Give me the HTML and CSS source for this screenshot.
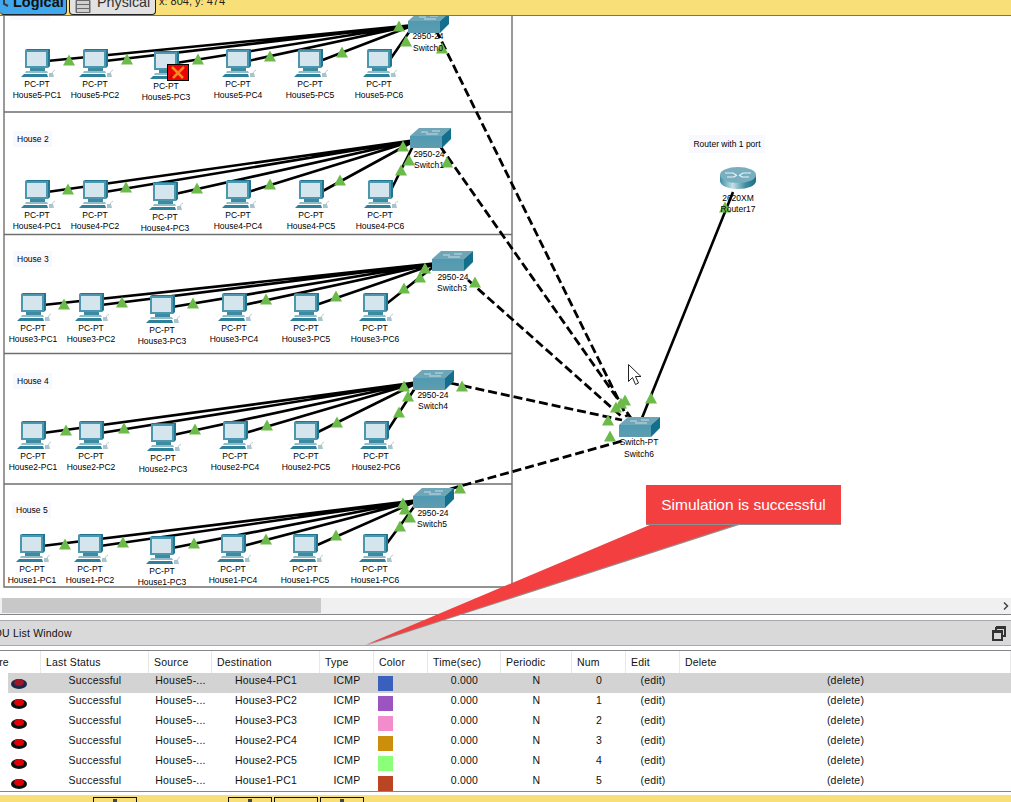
FILE: index.html
```html
<!DOCTYPE html>
<html lang="en">

<head>
    <meta charset="UTF-8">
    <title>Packet Tracer - Simulation</title>
    <link rel="stylesheet" href="styles.css">
</head>

<body>
    <!-- Top toolbar -->
    <div class="topbar">
        <div class="tab tab-logical">
            <svg class="tab-icon-logical" width="8" height="7" viewBox="0 0 8 7"><path d="M2 0v4l4 2" fill="none" stroke="#3a3a3a" stroke-width="2"/></svg>
            <span class="tab-text">Logical</span>
        </div>
        <div class="tab tab-physical">
            <svg class="tab-icon-physical" width="16" height="14" viewBox="0 0 16 14"><rect x="0.5" y="0" width="15" height="13" rx="1" fill="#6a6a6a"/><rect x="2" y="1" width="12" height="3" fill="#cfcfcf"/><rect x="2" y="5" width="12" height="3" fill="#cfcfcf"/><rect x="2" y="9" width="12" height="3" fill="#cfcfcf"/></svg>
            <span class="tab-text">Physical</span>
        </div>
        <span class="coords">x: 804, y: 474</span>
    </div>

    <!-- Workspace -->
    <div class="canvas">
        <svg class="diagram" width="1011" height="582" viewBox="0 16 1011 582">
            <defs>
                <linearGradient id="switchFront" x1="0" y1="0" x2="0" y2="1">
                    <stop offset="0" stop-color="#4f9ab2"/>
                    <stop offset="1" stop-color="#5f9cb0"/>
                </linearGradient>
                <linearGradient id="routerBody" x1="0" y1="0" x2="1" y2="0">
                    <stop offset="0" stop-color="#3f8ea3"/>
                    <stop offset="0.35" stop-color="#c4e0e6"/>
                    <stop offset="0.7" stop-color="#3f8ea3"/>
                    <stop offset="1" stop-color="#1c6e86"/>
                </linearGradient>
                <g id="pc">
                    <polygon points="4,1 6,0 29,0 29,17 27,19 4,19" fill="#1f7690"/>
                    <rect x="4" y="1" width="23" height="18" fill="#4c97ae"/>
                    <rect x="6" y="3" width="19" height="14" fill="#d5e5ed"/>
                    <rect x="9" y="19" width="15" height="3" fill="#3d8aa3"/>
                    <polygon points="5,22 26,22 27,24 4,24" fill="#8fbccb"/>
                    <polygon points="3,25 26,25 27,28 0,28" fill="#2f8099"/>
                    <polygon points="28,24 32,24 33,28 28,28" fill="#a9c4cd"/>
                    <path d="M31 24q1-2 3-3" fill="none" stroke="#b9c9cf"/>
                </g>
                <g id="switch">
                    <polygon points="0,8 9,0 41,0 32,8" fill="#6ea5b7"/>
                    <path d="M11 4h7M22 3h8M16 6h12" stroke="#c6dde4" fill="none"/>
                    <rect x="0" y="8" width="32" height="12" fill="url(#switchFront)"/>
                    <polygon points="32,8 41,0 41,11 32,20" fill="#136f8b"/>
                </g>
                <g id="router">
                    <path d="M0 8V14A18 8 0 0 0 36 14V8Z" fill="url(#routerBody)"/>
                    <ellipse cx="18" cy="8" rx="18" ry="8" fill="#78aebf"/>
                    <path d="M5 6h8l3 2M31 6h-8l-3 2M7 10h7l3-2M29 10h-7l-3-2" fill="none" stroke="#e8f3f6" stroke-width="1.2"/>
                </g>
                <polygon id="tri" points="-6,5.5 0,-5.5 6,5.5" fill="#6cbb4a"/>
            </defs>

            <!-- House boxes -->
            <rect class="note" x="10" y="16" width="40" height="4"/>
            <path class="box" d="M4 16V587H512V16M4 112H512M4 234.500H512M4 353.500H512M4 484H512"/>
            <rect class="note" x="13" y="131" width="39" height="16"/>
            <rect class="note" x="13" y="251" width="39" height="16"/>
            <rect class="note" x="13" y="373" width="39" height="16"/>
            <rect class="note" x="12" y="502" width="39" height="16"/>
            <text class="house-label" x="17" y="142">House 2</text>
            <text class="house-label" x="17" y="262">House 3</text>
            <text class="house-label" x="17" y="384">House 4</text>
            <text class="house-label" x="16" y="513">House 5</text>

            <!-- Links -->
            <path class="link" d="M47 61L414 25M105 61L414 25M176 63L414 25M248 61L414 25M320 61L414 25M389 61L414 25"/>
            <path class="link" d="M47 192L416 140M105 192L416 140M175 194L416 140M248 192L416 140M321 192L416 140M390 192L416 140"/>
            <path class="link" d="M43 305L438 263M101 305L438 263M172 307L438 263M244 305L438 263M316 305L438 263M385 305L438 263"/>
            <path class="link" d="M43 433L419 382M101 433L419 382M173 435L419 382M245 433L419 382M316 433L419 382M386 433L419 382"/>
            <path class="link" d="M42 546L419 500M100 546L419 500M172 548L419 500M243 546L419 500M315 546L419 500M385 546L419 500"/>
            <path class="link link-dashed" d="M436 30L627 417M440 146L631 418M468 280L621 416M450 383L622 420M450 489L622 441"/>
            <path class="link" d="M733 192L642 418"/>

            <!-- Devices -->
            <use href="#switch" x="408" y="13"/>
            <use href="#switch" x="410" y="128"/>
            <use href="#switch" x="432" y="251"/>
            <use href="#switch" x="413" y="370"/>
            <use href="#switch" x="413" y="488"/>
            <use href="#switch" x="619" y="417"/>
            <use href="#router" x="720" y="167"/>

            <g class="pcs">
                <g transform="translate(37 49)"><use href="#pc" x="-16"/><text y="38">PC-PT</text><text y="49">House5-PC1</text></g>
                <g transform="translate(95 49)"><use href="#pc" x="-16"/><text y="38">PC-PT</text><text y="49">House5-PC2</text></g>
                <g transform="translate(166 51)"><use href="#pc" x="-16"/><text y="38">PC-PT</text><text y="49">House5-PC3</text></g>
                <g transform="translate(238 49)"><use href="#pc" x="-16"/><text y="38">PC-PT</text><text y="49">House5-PC4</text></g>
                <g transform="translate(310 49)"><use href="#pc" x="-16"/><text y="38">PC-PT</text><text y="49">House5-PC5</text></g>
                <g transform="translate(379 49)"><use href="#pc" x="-16"/><text y="38">PC-PT</text><text y="49">House5-PC6</text></g>

                <g transform="translate(37 180)"><use href="#pc" x="-16"/><text y="38">PC-PT</text><text y="49">House4-PC1</text></g>
                <g transform="translate(95 180)"><use href="#pc" x="-16"/><text y="38">PC-PT</text><text y="49">House4-PC2</text></g>
                <g transform="translate(165 182)"><use href="#pc" x="-16"/><text y="38">PC-PT</text><text y="49">House4-PC3</text></g>
                <g transform="translate(238 180)"><use href="#pc" x="-16"/><text y="38">PC-PT</text><text y="49">House4-PC4</text></g>
                <g transform="translate(311 180)"><use href="#pc" x="-16"/><text y="38">PC-PT</text><text y="49">House4-PC5</text></g>
                <g transform="translate(380 180)"><use href="#pc" x="-16"/><text y="38">PC-PT</text><text y="49">House4-PC6</text></g>

                <g transform="translate(33 293)"><use href="#pc" x="-16"/><text y="38">PC-PT</text><text y="49">House3-PC1</text></g>
                <g transform="translate(91 293)"><use href="#pc" x="-16"/><text y="38">PC-PT</text><text y="49">House3-PC2</text></g>
                <g transform="translate(162 295)"><use href="#pc" x="-16"/><text y="38">PC-PT</text><text y="49">House3-PC3</text></g>
                <g transform="translate(234 293)"><use href="#pc" x="-16"/><text y="38">PC-PT</text><text y="49">House3-PC4</text></g>
                <g transform="translate(306 293)"><use href="#pc" x="-16"/><text y="38">PC-PT</text><text y="49">House3-PC5</text></g>
                <g transform="translate(375 293)"><use href="#pc" x="-16"/><text y="38">PC-PT</text><text y="49">House3-PC6</text></g>

                <g transform="translate(33 421)"><use href="#pc" x="-16"/><text y="38">PC-PT</text><text y="49">House2-PC1</text></g>
                <g transform="translate(91 421)"><use href="#pc" x="-16"/><text y="38">PC-PT</text><text y="49">House2-PC2</text></g>
                <g transform="translate(163 423)"><use href="#pc" x="-16"/><text y="38">PC-PT</text><text y="49">House2-PC3</text></g>
                <g transform="translate(235 421)"><use href="#pc" x="-16"/><text y="38">PC-PT</text><text y="49">House2-PC4</text></g>
                <g transform="translate(306 421)"><use href="#pc" x="-16"/><text y="38">PC-PT</text><text y="49">House2-PC5</text></g>
                <g transform="translate(376 421)"><use href="#pc" x="-16"/><text y="38">PC-PT</text><text y="49">House2-PC6</text></g>

                <g transform="translate(32 534)"><use href="#pc" x="-16"/><text y="38">PC-PT</text><text y="49">House1-PC1</text></g>
                <g transform="translate(90 534)"><use href="#pc" x="-16"/><text y="38">PC-PT</text><text y="49">House1-PC2</text></g>
                <g transform="translate(162 536)"><use href="#pc" x="-16"/><text y="38">PC-PT</text><text y="49">House1-PC3</text></g>
                <g transform="translate(233 534)"><use href="#pc" x="-16"/><text y="38">PC-PT</text><text y="49">House1-PC4</text></g>
                <g transform="translate(305 534)"><use href="#pc" x="-16"/><text y="38">PC-PT</text><text y="49">House1-PC5</text></g>
                <g transform="translate(375 534)"><use href="#pc" x="-16"/><text y="38">PC-PT</text><text y="49">House1-PC6</text></g>
            </g>

            <!-- Router note -->
            <rect class="note" x="689" y="135" width="76" height="18"/>
            <text class="pcs-note" x="727" y="147">Router with 1 port</text>

            <!-- Link lights -->
            <use href="#tri" x="69" y="60"/><use href="#tri" x="127" y="59"/><use href="#tri" x="198" y="59"/><use href="#tri" x="270" y="56"/><use href="#tri" x="342" y="52"/><use href="#tri" x="399" y="26"/><use href="#tri" x="406" y="41"/><use href="#tri" x="442" y="48"/>
            <use href="#tri" x="68" y="189"/><use href="#tri" x="126" y="187"/><use href="#tri" x="197" y="188"/><use href="#tri" x="270" y="184"/><use href="#tri" x="340" y="180"/><use href="#tri" x="401" y="170"/><use href="#tri" x="403" y="146"/><use href="#tri" x="409" y="160"/><use href="#tri" x="447" y="162"/>
            <use href="#tri" x="64" y="304"/><use href="#tri" x="122" y="302"/><use href="#tri" x="193" y="303"/><use href="#tri" x="266" y="299"/><use href="#tri" x="336" y="296"/><use href="#tri" x="404" y="288"/><use href="#tri" x="420" y="277"/><use href="#tri" x="425" y="268"/><use href="#tri" x="475" y="282"/>
            <use href="#tri" x="66" y="430"/><use href="#tri" x="124" y="428"/><use href="#tri" x="195" y="429"/><use href="#tri" x="267" y="425"/><use href="#tri" x="337" y="422"/><use href="#tri" x="399" y="412"/><use href="#tri" x="404" y="386"/><use href="#tri" x="408" y="396"/><use href="#tri" x="462" y="386"/>
            <use href="#tri" x="65" y="544"/><use href="#tri" x="123" y="542"/><use href="#tri" x="194" y="543"/><use href="#tri" x="266" y="539"/><use href="#tri" x="336" y="535"/><use href="#tri" x="400" y="526"/><use href="#tri" x="410" y="517"/><use href="#tri" x="403" y="503"/><use href="#tri" x="405" y="509"/><use href="#tri" x="460" y="488"/>
            <use href="#tri" x="651" y="398"/><use href="#tri" x="625" y="400"/><use href="#tri" x="621" y="403"/><use href="#tri" x="616" y="407"/><use href="#tri" x="608" y="420"/><use href="#tri" x="610" y="436"/><use href="#tri" x="725" y="207"/>

            <!-- Device labels sit on top of the lights -->
            <g class="pcs">
                <text x="428" y="39">2950-24</text><text x="428" y="51">Switch0</text>
                <text x="429" y="157">2950-24</text><text x="429" y="168">Switch1</text>
                <text x="453" y="280">2950-24</text><text x="452" y="291">Switch3</text>
                <text x="433" y="398">2950-24</text><text x="433" y="409">Switch4</text>
                <text x="433" y="516">2950-24</text><text x="432" y="527">Switch5</text>
                <text x="639" y="445">Switch-PT</text><text x="639" y="457">Switch6</text>
                <text x="738" y="201">2620XM</text><text x="738" y="212">Router17</text>
            </g>

            <!-- Dropped packet on House5-PC3 -->
            <rect x="167.500" y="64.500" width="21" height="16" fill="#f00000" stroke="#000"/>
            <path d="M172 67l11 11M184 67l-11 11" stroke="#f58a1e" stroke-width="2.500"/>
            <path d="M169 78l4-3M184 70l3-3" stroke="#7a1010" stroke-width="1"/>

            <!-- Mouse pointer -->
            <path d="M628.500 364.500v17l4-4 3 7 3-1.500-3-6.500h5.500z" fill="#fff" stroke="#222"/>
        </svg>
    </div>

    <!-- Horizontal scrollbar -->
    <div class="scrollbar">
        <div class="scroll-thumb"></div>
        <svg class="scroll-arrow" width="6" height="8" viewBox="0 0 6 8"><path d="M1 0.500L4.500 4L1 7.500" fill="none" stroke="#444" stroke-width="1.500"/></svg>
    </div>

    <!-- PDU list -->
    <div class="pdu-title">
        <span class="pdu-title-text">PDU List Window</span>
        <svg width="14" height="15" viewBox="0 0 14 15"><path d="M4 1h9v9h-3M4 1v3" fill="none" stroke="#333" stroke-width="2"/><rect x="1" y="5" width="9" height="9" fill="none" stroke="#333" stroke-width="2"/><path d="M1 6h9M4 2h9" stroke="#333" stroke-width="2"/></svg>
    </div>

    <div class="pdu-list">
        <table class="pdu-table">
            <colgroup>
                <col class="c-fire"><col class="c-status"><col class="c-source"><col class="c-dest"><col class="c-type"><col class="c-color"><col class="c-time"><col class="c-periodic"><col class="c-num"><col class="c-edit"><col class="c-delete">
            </colgroup>
            <thead>
                <tr>
                    <th class="th-fire">Fire</th><th>Last Status</th><th>Source</th><th>Destination</th><th>Type</th><th>Color</th><th>Time(sec)</th><th>Periodic</th><th>Num</th><th>Edit</th><th>Delete</th>
                </tr>
            </thead>
            <tbody>
                <tr class="selected">
                    <td class="fire"><svg class="led led-dim" width="16" height="11" viewBox="0 0 16 11"><ellipse class="led-base" cx="8" cy="6" rx="8" ry="5"/><ellipse class="led-top" cx="8" cy="4.500" rx="5" ry="3.500"/></svg></td>
                    <td>Successful</td><td>House5-...</td><td>House4-PC1</td><td>ICMP</td><td class="swatch-cell"><div class="swatch swatch-blue"></div></td><td>0.000</td><td>N</td><td>0</td><td>(edit)</td><td>(delete)</td>
                </tr>
                <tr>
                    <td class="fire"><svg class="led" width="16" height="11" viewBox="0 0 16 11"><ellipse class="led-base" cx="8" cy="6" rx="8" ry="5"/><ellipse class="led-top" cx="8" cy="4.500" rx="5" ry="3.500"/></svg></td>
                    <td>Successful</td><td>House5-...</td><td>House3-PC2</td><td>ICMP</td><td class="swatch-cell"><div class="swatch swatch-purple"></div></td><td>0.000</td><td>N</td><td>1</td><td>(edit)</td><td>(delete)</td>
                </tr>
                <tr>
                    <td class="fire"><svg class="led" width="16" height="11" viewBox="0 0 16 11"><ellipse class="led-base" cx="8" cy="6" rx="8" ry="5"/><ellipse class="led-top" cx="8" cy="4.500" rx="5" ry="3.500"/></svg></td>
                    <td>Successful</td><td>House5-...</td><td>House3-PC3</td><td>ICMP</td><td class="swatch-cell"><div class="swatch swatch-pink"></div></td><td>0.000</td><td>N</td><td>2</td><td>(edit)</td><td>(delete)</td>
                </tr>
                <tr>
                    <td class="fire"><svg class="led" width="16" height="11" viewBox="0 0 16 11"><ellipse class="led-base" cx="8" cy="6" rx="8" ry="5"/><ellipse class="led-top" cx="8" cy="4.500" rx="5" ry="3.500"/></svg></td>
                    <td>Successful</td><td>House5-...</td><td>House2-PC4</td><td>ICMP</td><td class="swatch-cell"><div class="swatch swatch-amber"></div></td><td>0.000</td><td>N</td><td>3</td><td>(edit)</td><td>(delete)</td>
                </tr>
                <tr>
                    <td class="fire"><svg class="led" width="16" height="11" viewBox="0 0 16 11"><ellipse class="led-base" cx="8" cy="6" rx="8" ry="5"/><ellipse class="led-top" cx="8" cy="4.500" rx="5" ry="3.500"/></svg></td>
                    <td>Successful</td><td>House5-...</td><td>House2-PC5</td><td>ICMP</td><td class="swatch-cell"><div class="swatch swatch-green"></div></td><td>0.000</td><td>N</td><td>4</td><td>(edit)</td><td>(delete)</td>
                </tr>
                <tr>
                    <td class="fire"><svg class="led" width="16" height="11" viewBox="0 0 16 11"><ellipse class="led-base" cx="8" cy="6" rx="8" ry="5"/><ellipse class="led-top" cx="8" cy="4.500" rx="5" ry="3.500"/></svg></td>
                    <td>Successful</td><td>House5-...</td><td>House1-PC1</td><td>ICMP</td><td class="swatch-cell"><div class="swatch swatch-rust"></div></td><td>0.000</td><td>N</td><td>5</td><td>(edit)</td><td>(delete)</td>
                </tr>
            </tbody>
        </table>
    </div>

    <!-- Bottom toolbar, cut off by the window -->
    <div class="bottombar">
        <div class="bottom-btn btn-back"><span class="btn-tip"></span></div>
        <div class="bottom-btn btn-a"><span class="btn-tip"></span></div>
        <div class="bottom-btn"></div>
        <div class="bottom-btn"><span class="btn-tip"></span></div>
    </div>

    <!-- Callout over everything -->
    <svg class="callout-tail" width="1011" height="802" viewBox="0 0 1011 802">
        <polygon points="365,646 653,525 739,525" fill="#8f8f8f"/>
        <polygon points="365,645 652,524 738,524" fill="#f33f3f"/>
    </svg>
    <div class="callout">Simulation is successful</div>
</body>

</html>
```

FILE: styles.css
```css
* {
    box-sizing: border-box;
    margin: 0;
    padding: 0;
}

html,
body {
    height: 802px;
    overflow: hidden;
}

body {
    position: relative;
    display: flex;
    flex-direction: column;
    background: #fff;
    color: #111;
    font-family: 'Liberation Sans', Arial, sans-serif;
}

/* Top toolbar */
.topbar {
    display: flex;
    align-items: flex-start;
    height: 16px;
    background: #f9df78;
    border-bottom: 1px solid #77746a;
    overflow: hidden;
}

.tab {
    display: flex;
    height: 15px;
    border: 1px solid #222;
    border-top: none;
    border-radius: 0 0 4px 4px;
    overflow: hidden;
}

.tab-text {
    margin-top: -5px;
    line-height: 15px;
    white-space: nowrap;
}

.tab-logical {
    width: 67px;
    padding-left: 13px;
    position: relative;
    background: #3fa8ee;
    font-size: 14.500px;
    font-weight: bold;
    border-left: none;
}

.tab-icon-logical {
    position: absolute;
    left: 2px;
    top: 0;
}

.tab-physical {
    width: 87px;
    margin-left: 2px;
    padding-left: 5px;
    background: #e2e2e2;
    color: #333;
    font-size: 14.300px;
}

.tab-icon-physical {
    margin: 0 6px 0 0;
    flex: none;
}

.coords {
    margin-left: 3px;
    margin-top: -5px;
    line-height: 13px;
    font-size: 11px;
    color: #222;
}

/* Workspace */
.canvas {
    height: 582px;
    background: #fff;
}

.diagram {
    display: block;
}

.box {
    fill: none;
    stroke: #6f6f6f;
    stroke-width: 1.4;
}

.note {
    fill: #f8f8ff;
}

.house-label,
.pcs text,
.pcs-note {
    font-family: 'Liberation Sans', Arial, sans-serif;
    font-size: 8.500px;
    fill: #000;
}

.pcs text,
.pcs-note {
    text-anchor: middle;
}

.link {
    fill: none;
    stroke: #000;
    stroke-width: 2.600;
}

.link-dashed {
    stroke-dasharray: 9 4;
    stroke-width: 2.800;
}

/* Scrollbar */
.scrollbar {
    position: relative;
    height: 17px;
    padding-left: 2px;
    background: #f0f0f0;
    border-bottom: 1px solid #85858c;
}

.scroll-thumb {
    width: 319px;
    height: 15px;
    background: #c8c8c8;
}

.scroll-arrow {
    position: absolute;
    right: 2px;
    top: 4px;
}

/* PDU list */
.pdu-title {
    display: flex;
    align-items: center;
    justify-content: space-between;
    height: 26px;
    margin-top: 5px;
    padding-right: 5px;
    background: #d9d9d9;
    border-top: 1px solid #a9a9a9;
    border-bottom: 1px solid #a9a9a9;
    font-size: 10.500px;
    letter-spacing: 0.200px;
    overflow: hidden;
}

.pdu-title-text {
    margin-left: -13px;
    white-space: nowrap;
}

.pdu-list {
    height: 142px;
    margin-top: 4px;
    border-top: 1px solid #85858c;
    border-bottom: 1px solid #85858c;
    overflow: hidden;
}

.pdu-table {
    table-layout: fixed;
    width: 1011px;
    border-collapse: separate;
    border-spacing: 0;
    font-size: 10.500px;
    letter-spacing: 0.200px;
}

.c-fire { width: 41px; }
.c-status { width: 108px; }
.c-source { width: 63px; }
.c-dest { width: 108px; }
.c-type { width: 54px; }
.c-color { width: 54px; }
.c-time { width: 73px; }
.c-periodic { width: 71px; }
.c-num { width: 54px; }
.c-edit { width: 54px; }
.c-delete { width: 331px; }

.pdu-table th {
    height: 22px;
    padding-left: 5px;
    border-right: 1px solid #e8e8e8;
    font-weight: normal;
    text-align: left;
    white-space: nowrap;
    overflow: hidden;
}

.pdu-table th.th-fire {
    padding-left: 0;
    text-indent: -10px;
}

.pdu-table td {
    height: 20px;
    padding-bottom: 6px;
    text-align: center;
    white-space: nowrap;
    overflow: hidden;
}

.pdu-table td.fire {
    padding: 5px 0 0 11px;
    text-align: left;
    vertical-align: top;
    line-height: 0;
}

.pdu-table td.swatch-cell {
    padding: 3px 0 2px 4px;
}

.selected td {
    background: #d3d3d3;
}

.pdu-table .selected td.fire {
    background: linear-gradient(90deg, #fff 8px, #d3d3d3 8px);
}

.swatch {
    width: 15px;
    height: 15px;
}

.swatch-blue { background: #3a5fbd; }
.swatch-purple { background: #9b54c0; }
.swatch-pink { background: #f28ccd; }
.swatch-amber { background: #cb8f0c; }
.swatch-green { background: #8cff7a; }
.swatch-rust { background: #bb4422; }

.led-base { fill: #111; }
.led-top { fill: #e00008; }
.led-dim .led-base { fill: #1c2a4a; }
.led-dim .led-top { fill: #a01528; }

/* Bottom toolbar */
.bottombar {
    display: flex;
    height: 7px;
    margin-top: 3px;
    padding: 2px 0 0 93px;
    background: #f9df78;
    overflow: hidden;
}

.bottom-btn {
    display: flex;
    justify-content: center;
    width: 44px;
    height: 20px;
    margin-right: 2px;
    border: 1px solid #111;
    background: #f9df78;
}

.btn-back {
    margin-right: 91px;
}

.btn-tip {
    width: 4px;
    height: 3px;
    margin-top: 1px;
    background: #444;
}

/* Callout */
.callout-tail {
    position: absolute;
    left: 0;
    top: 0;
    pointer-events: none;
}

.callout {
    position: absolute;
    left: 646px;
    top: 485px;
    width: 195px;
    height: 39px;
    background: #f33f3f;
    box-shadow: 0 1px 0 #8f8f8f;
    color: #fff;
    font-size: 15.500px;
    line-height: 39px;
    text-align: center;
}
```
